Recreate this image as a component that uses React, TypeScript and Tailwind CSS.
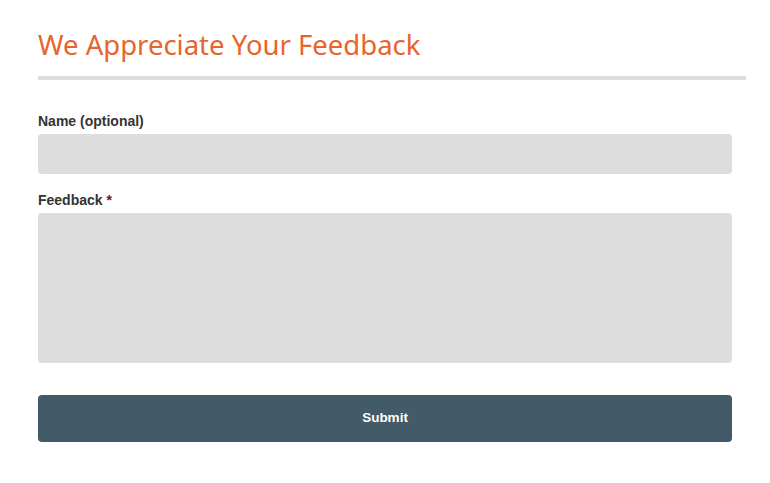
export default function App() {
  return (
    <div className="w-[770px] h-[483px] bg-white pl-[38px] pr-[24px] pt-[27px]" style={{ fontFamily: '"Liberation Sans", Arial, sans-serif' }}>
      <h1 className="text-[27.5px] leading-[36px] text-[#e8642c]" style={{ fontFamily: '"Noto Sans", sans-serif' }}>We Appreciate Your Feedback</h1>
      <div className="h-[4px] bg-[#dddddd] mt-[13px]" />
      <form className="mr-[14px] mt-[33px] flex flex-col">
        <label className="text-[14px] font-bold text-[#333] leading-[16px]">Name (optional)</label>
        <input className="mt-[5px] h-[40px] rounded-[4px] bg-[#dddddd] outline-none" />
        <label className="mt-[18px] text-[14px] font-bold text-[#333] leading-[16px]">
          Feedback <span className="text-[#7a0b1a]">*</span>
        </label>
        <textarea className="mt-[5px] h-[150px] rounded-[4px] bg-[#dddddd] outline-none resize-none" />
        <button type="button" className="mt-[32px] h-[47px] rounded-[4px] bg-[#435a69] text-white text-[13.5px] font-bold">Submit</button>
      </form>
    </div>
  );
}
